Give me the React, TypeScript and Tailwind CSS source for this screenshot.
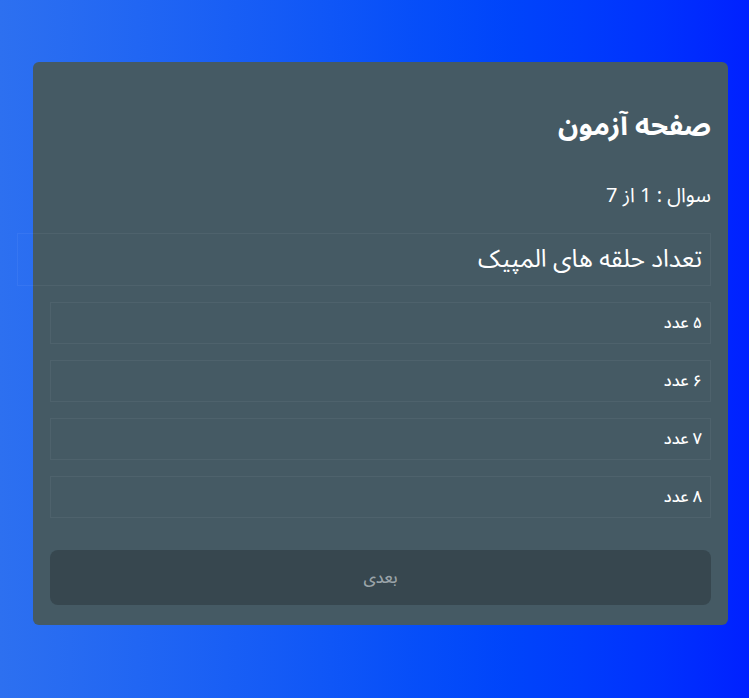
import { useState } from "react";

const OPTIONS = ["۵ عدد", "۶ عدد", "۷ عدد", "۸ عدد"];

export default function App() {
  const [picked, setPicked] = useState<number | null>(null);

  return (
    <div
      dir="rtl"
      className="min-h-screen w-full bg-gradient-to-r from-[#2d70f0] to-[#0020ff] pt-[62px] pb-[72px] pr-[21px] pl-[33px] font-['Noto_Sans_Arabic','Noto_Sans',sans-serif]"
    >
      <div className="rounded-md bg-[#455a64] px-[17px] pt-[17px] pb-[20px] text-white">
        <h2 className="mt-[30px] text-[28px] font-bold leading-[36px]">صفحه آزمون</h2>
        <p className="mt-[37px] text-[20px] leading-[28px]">سوال : 1 از 7</p>

        {/* سوال */}
        <div className="ml-[-33px] mt-[23px] border border-white/[0.05] px-[8px] py-[10px] text-[24.5px] leading-[31px]">
          تعداد حلقه های المپیک
        </div>

        <div className="mt-[16px] flex flex-col gap-[16px]">
          {OPTIONS.map((o, i) => (
            <button
              key={o}
              type="button"
              onClick={() => setPicked(i)}
              className={
                "h-[42px] w-full border border-white/[0.05] px-[8px] text-right text-[16px] font-medium " +
                (picked === i ? "bg-white/10" : "")
              }
            >
              {o}
            </button>
          ))}
        </div>

        <button
          type="button"
          disabled={picked === null}
          className="mt-[32px] h-[55px] w-full rounded-lg bg-[#37474f] text-[16px] font-medium text-[#9aa4a9]"
        >
          بعدی
        </button>
      </div>
    </div>
  );
}
